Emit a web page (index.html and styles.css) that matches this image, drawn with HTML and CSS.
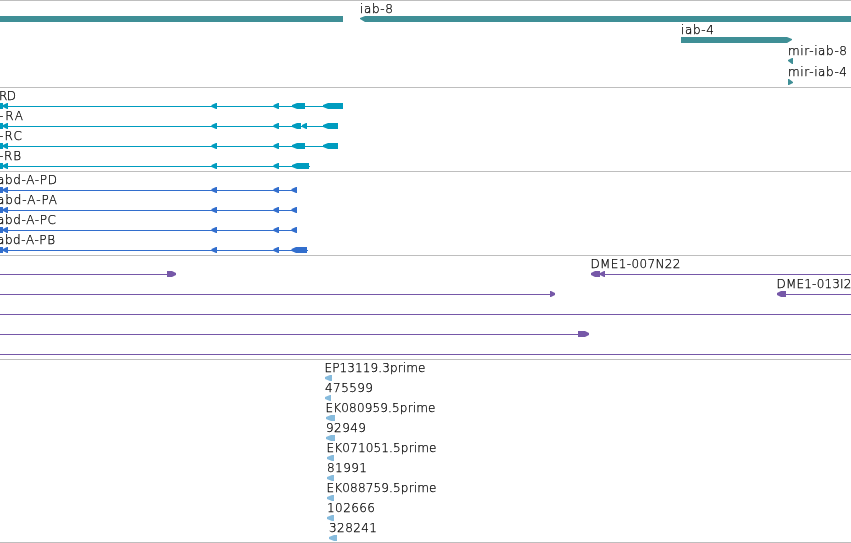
FILE: index.html
```
<!DOCTYPE html>
<html lang="en">
<head>
    <meta charset="UTF-8">
    <title>abd-A region</title>
    <link rel="stylesheet" href="styles.css">
</head>
<body>
    <div class="browser">
        <!-- Genes -->
        <div class="track genes">
            <svg width="851" height="86" viewBox="0 1 851 86">
                <path d="M0 16H343V22H0zM360 18V19L365 22H851V16H365z"/>
                <path d="M681 37H787L792 39V40L787 43H681zM788 60V61L792 64H793V58H792zM788 79H789L793 82V83L789 85H788z"/>
                <text x="360" y="13" textLength="33">iab-8</text>
                <text x="681" y="34" textLength="33">iab-4</text>
                <text x="788" y="55" textLength="59">mir-iab-8</text>
                <text x="788" y="76" textLength="59">mir-iab-4</text>
            </svg>
        </div>

        <!-- Transcripts -->
        <div class="track transcripts">
            <svg width="851" height="83" viewBox="0 88 851 83">
                <defs>
                    <path id="exons" d="M0 0H3V2L7 0H8V6H7L3 4V6H0zM211.5 2V4L216 6H217V0H216zM273.5 2V4L278 6H279V0H278z"/>
                </defs>
                <path d="M0 106H343V107H0zM0 126H338V127H0zM0 146H338V147H0zM0 166H310V167H0z"/>
                <use href="#exons" y="103"/>
                <use href="#exons" y="123"/>
                <use href="#exons" y="143"/>
                <use href="#exons" y="163"/>
                <path d="M292 105V107L297 109H305V103H297zM323 105V107L328 109H343V103H328z"/>
                <path d="M292 125V127L297 129H301V123H297zM302 125V127L306 129H307V123H306zM323 125V127L328 129H338V123H328z"/>
                <path d="M292 145V147L297 149H305V143H297zM323 145V147L328 149H338V143H328z"/>
                <path d="M292 165V167L297 169H309V163H297z"/>
                <text x="-1" y="100" textLength="17">RD</text>
                <text x="-1" y="120" textLength="24">-RA</text>
                <text x="-1" y="140" textLength="23">-RC</text>
                <text x="-1" y="160" textLength="22">-RB</text>
            </svg>
        </div>

        <!-- Translations -->
        <div class="track proteins">
            <svg width="851" height="83" viewBox="0 172 851 83">
                <path d="M0 190H297V191H0zM0 210H297V211H0zM0 230H297V231H0zM0 250H308V251H0z"/>
                <use href="#exons" y="187"/>
                <use href="#exons" y="207"/>
                <use href="#exons" y="227"/>
                <use href="#exons" y="247"/>
                <path d="M291.5 189V191L296 193H297V187H296zM291.5 209V211L296 213H297V207H296z"/>
                <path d="M291.5 229V231L296 233H297V227H296zM291.5 249V251L296 253H307V247H296z"/>
                <text x="-3" y="184" textLength="60">abd-A-PD</text>
                <text x="-3" y="204" textLength="60">abd-A-PA</text>
                <text x="-3" y="224" textLength="59">abd-A-PC</text>
                <text x="-3" y="244" textLength="58">abd-A-PB</text>
            </svg>
        </div>

        <!-- BAC clones -->
        <div class="track clones">
            <svg width="851" height="103" viewBox="0 256 851 103">
                <path d="M0 274H170V275H0zM600 274H851V275H600zM0 294H555V295H0zM780 294H851V295H780z"/>
                <path d="M0 314H851V315H0zM0 334H580V335H0zM0 354H851V355H0z"/>
                <path d="M167 271H172L176 273V275L172 277H167zM591 273V275L595 277H600V275L604 277H605V271H604L600 273V271H595z"/>
                <path d="M550 291H551L555 293V295L551 297H550zM777 293V295L781 297H786V291H781zM578 331H585L589 333V335L585 337H578z"/>
                <text x="590.5" y="268" textLength="90">DME1-007N22</text>
                <text x="776.5" y="288" textLength="75">DME1-013I2</text>
            </svg>
        </div>

        <!-- Insertions -->
        <div class="track insertions">
            <svg width="851" height="182" viewBox="0 360 851 182">
                <path d="M325 377V379L330 381H332V375H330zM325 397V399L330 401H331V395H330zM326 417V419L331 421H335V415H331z"/>
                <path d="M326 437V439L331 441H335V435H331zM327 457V459L332 461H334V455H332zM327 477V479L332 481H334V475H332z"/>
                <path d="M327 497V499L332 501H334V495H332zM327 517V519L332 521H334V515H332zM329 537V539L334 541H337V535H334z"/>
                <text x="324.5" y="372" textLength="101">EP13119.3prime</text>
                <text x="325" y="392" textLength="48">475599</text>
                <text x="325.5" y="412" textLength="110">EK080959.5prime</text>
                <text x="326" y="432" textLength="40">92949</text>
                <text x="326.5" y="452" textLength="110">EK071051.5prime</text>
                <text x="327" y="472" textLength="40">81991</text>
                <text x="326.5" y="492" textLength="110">EK088759.5prime</text>
                <text x="327" y="512" textLength="48">102666</text>
                <text x="329" y="532" textLength="48">328241</text>
            </svg>
        </div>
    </div>
</body>
</html>
```
FILE: styles.css
```
body {
    margin: 0;
    background-color: #fff;
    overflow: hidden;
}

.browser {
    width: 851px;
    border-bottom: 1px solid #bebebe;
}

.track {
    border-top: 1px solid #bebebe;
}

.track svg {
    display: block;
    will-change: transform;
}

.track text {
    font-family: "DejaVu Sans Light", "DejaVu Sans", sans-serif;
    font-size: 12px;
    fill: #000;
    stroke: #000;
    stroke-width: 0.25px;
}

/* Track colours */
.genes {
    fill: #3f8f96;
}

.transcripts {
    fill: #009cbf;
}

.proteins {
    fill: #326ecd;
}

.clones {
    fill: #7658a8;
}

.insertions {
    fill: #86bbdd;
}
```
